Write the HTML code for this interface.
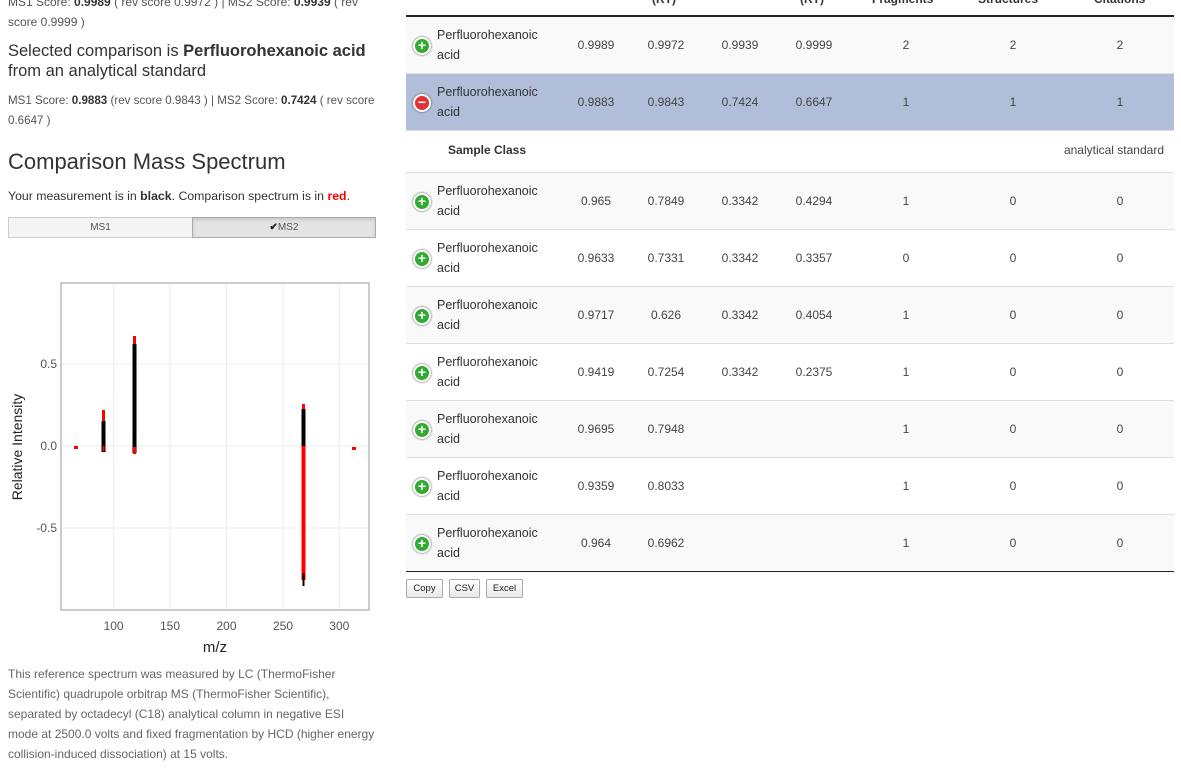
<!DOCTYPE html>
<html><head><meta charset="utf-8">
<style>
*{box-sizing:border-box;margin:0;padding:0}
body{width:1181px;height:768px;overflow:hidden;background:#fff;font-family:"Liberation Sans",sans-serif;color:#333;position:relative}
.a{position:absolute;white-space:nowrap}
.s{font-size:12px;color:#555;line-height:20px}
.row{position:absolute;left:406px;width:768px;height:57px;border-top:1px solid #ddd}
.row div{position:absolute;font-size:12px;color:#444;top:21px;transform:translateX(-50%);white-space:nowrap}
.row .nm{left:31px;top:8px;transform:none;line-height:20px;font-size:12.5px}
.ic{position:absolute;left:7px;top:20px;width:18px;height:18px;border-radius:50%;border:2px solid #fff;box-shadow:0 0 2px #444;color:#fff;font-weight:bold;font-size:14px;line-height:13px;text-align:center}
.g{background:#f9f9f9}
.btn{position:absolute;top:579px;height:19px;border:1px solid #aaa;border-radius:2px;background:linear-gradient(#fff,#e9e9e9);font-size:9.5px;line-height:17px;text-align:center;color:#222}
</style></head><body>

<div class="a s" style="left:8px;top:-8px;width:370px;white-space:normal">MS1 Score: <b style="color:#333">0.9989</b> ( rev score 0.9972 ) | MS2 Score: <b style="color:#333">0.9939</b> ( rev score 0.9999 )</div>
<div class="a" style="left:8px;top:41px;font-size:16.5px;line-height:20px;color:#333">Selected comparison is <b>Perfluorohexanoic acid</b><br>from an analytical standard</div>
<div class="a s" style="left:8px;top:91px;width:372px;white-space:normal;font-size:11.6px">MS1 Score: <b style="color:#333">0.9883</b> (rev score 0.9843 ) | MS2 Score: <b style="color:#333">0.7424</b> ( rev score 0.6647 )</div>
<div class="a" style="left:8px;top:149px;font-size:22px;color:#333">Comparison Mass Spectrum</div>
<div class="a" style="left:8px;top:189px;font-size:12.3px;color:#333">Your measurement is in <b>black</b>. Comparison spectrum is in <b style="color:#f00">red</b>.</div>
<div class="a" style="left:8px;top:217px;width:185px;height:21px;border:1px solid #ccc;background:#f4f4f4;font-size:10px;line-height:19px;text-align:center;color:#555">MS1</div>
<div class="a" style="left:192px;top:217px;width:184px;height:21px;border:1px solid #aaa;background:#e4e4e4;font-size:10px;line-height:19px;text-align:center;color:#555;box-shadow:inset 0 2px 3px rgba(0,0,0,.12)"><b style="color:#222">✔</b>MS2</div>

<svg class="a" style="left:0;top:270px" width="400" height="390" viewBox="0 270 400 390">
<rect x="61" y="283" width="308" height="327" fill="#fff" stroke="#999" stroke-width="1"/>
<g stroke="#ececec" stroke-width="1">
<line x1="113.6" y1="284" x2="113.6" y2="609"/><line x1="170" y1="284" x2="170" y2="609"/><line x1="226.5" y1="284" x2="226.5" y2="609"/><line x1="283" y1="284" x2="283" y2="609"/><line x1="339.3" y1="284" x2="339.3" y2="609"/>
<line x1="62" y1="364" x2="368" y2="364"/><line x1="62" y1="446" x2="368" y2="446"/><line x1="62" y1="528" x2="368" y2="528"/>
</g>
<g font-family="Liberation Sans,sans-serif" font-size="12" fill="#555">
<text x="57" y="368" text-anchor="end">0.5</text><text x="57" y="450" text-anchor="end">0.0</text><text x="57" y="532" text-anchor="end">-0.5</text>
<text x="113.6" y="630" text-anchor="middle">100</text><text x="170" y="630" text-anchor="middle">150</text><text x="226.5" y="630" text-anchor="middle">200</text><text x="283" y="630" text-anchor="middle">250</text><text x="339.3" y="630" text-anchor="middle">300</text>
</g>
<text x="215" y="652" text-anchor="middle" font-family="Liberation Sans,sans-serif" font-size="15" fill="#222">m/z</text>
<text transform="translate(22,447) rotate(-90)" text-anchor="middle" font-family="Liberation Sans,sans-serif" font-size="14" fill="#222">Relative Intensity</text>
<g>
<rect x="74" y="446" width="4" height="3" fill="#f00"/>
<rect x="102" y="410" width="3" height="20" fill="#f00"/><rect x="101.5" y="421" width="4" height="31" fill="#000"/><rect x="102.5" y="446" width="2" height="5" fill="#f00"/>
<rect x="133" y="336" width="3" height="12" fill="#f00"/><rect x="132.5" y="344" width="4" height="109" fill="#000"/><rect x="133" y="447" width="3" height="7" fill="#f00"/>
<rect x="302" y="404" width="3" height="8" fill="#f00"/><rect x="301.5" y="409" width="4" height="38" fill="#000"/><rect x="301.5" y="446" width="4" height="134" fill="#f00"/><rect x="302.5" y="573" width="2" height="13" fill="#000"/>
<rect x="352" y="447" width="4" height="3" fill="#f00"/>
</g>
</svg>

<div class="a" style="left:8px;top:664px;width:368px;white-space:normal;font-size:12px;line-height:20px;color:#666">This reference spectrum was measured by LC (ThermoFisher Scientific) quadrupole orbitrap MS (ThermoFisher Scientific), separated by octadecyl (C18) analytical column in negative ESI mode at 2500.0 volts and fixed fragmentation by HCD (higher energy collision-induced dissociation) at 15 volts.</div>

<div class="a" style="left:406px;top:-8px;width:768px;height:24px;font-size:12px;font-weight:bold;color:#333">
<span class="a" style="left:246px;top:0">(RT)</span><span class="a" style="left:394px;top:0">(RT)</span><span class="a" style="left:466px;top:0">Fragments</span><span class="a" style="left:572px;top:0">Structures</span><span class="a" style="left:688px;top:0">Citations</span>
</div>
<div class="a" style="left:406px;top:15px;width:768px;height:2px;background:#222"></div>

<div class="row g" style="top:17px;border-top:none"><span class="ic" style="background:#3a3">+</span><span class="nm a">Perfluorohexanoic<br>acid</span><div style="left:190px">0.9989</div><div style="left:260px">0.9972</div><div style="left:334px">0.9939</div><div style="left:408px">0.9999</div><div style="left:500px">2</div><div style="left:607px">2</div><div style="left:714px">2</div></div>
<div class="row" style="top:73px;background:#b0bed9"><span class="ic" style="background:#d33">−</span><span class="nm a">Perfluorohexanoic<br>acid</span><div style="left:190px">0.9883</div><div style="left:260px">0.9843</div><div style="left:334px">0.7424</div><div style="left:408px">0.6647</div><div style="left:500px">1</div><div style="left:607px">1</div><div style="left:714px">1</div></div>
<div class="row" style="top:130px;height:43px"><div style="left:81px;top:12px;font-weight:bold;color:#333">Sample Class</div><div style="left:auto;right:10px;top:12px;transform:none">analytical standard</div></div>

<div class="row g" style="top:172px"><span class="ic" style="background:#3a3">+</span><span class="nm a">Perfluorohexanoic<br>acid</span><div style="left:190px">0.965</div><div style="left:260px">0.7849</div><div style="left:334px">0.3342</div><div style="left:408px">0.4294</div><div style="left:500px">1</div><div style="left:607px">0</div><div style="left:714px">0</div></div>
<div class="row" style="top:229px"><span class="ic" style="background:#3a3">+</span><span class="nm a">Perfluorohexanoic<br>acid</span><div style="left:190px">0.9633</div><div style="left:260px">0.7331</div><div style="left:334px">0.3342</div><div style="left:408px">0.3357</div><div style="left:500px">0</div><div style="left:607px">0</div><div style="left:714px">0</div></div>
<div class="row g" style="top:286px"><span class="ic" style="background:#3a3">+</span><span class="nm a">Perfluorohexanoic<br>acid</span><div style="left:190px">0.9717</div><div style="left:260px">0.626</div><div style="left:334px">0.3342</div><div style="left:408px">0.4054</div><div style="left:500px">1</div><div style="left:607px">0</div><div style="left:714px">0</div></div>
<div class="row" style="top:343px"><span class="ic" style="background:#3a3">+</span><span class="nm a">Perfluorohexanoic<br>acid</span><div style="left:190px">0.9419</div><div style="left:260px">0.7254</div><div style="left:334px">0.3342</div><div style="left:408px">0.2375</div><div style="left:500px">1</div><div style="left:607px">0</div><div style="left:714px">0</div></div>
<div class="row g" style="top:400px"><span class="ic" style="background:#3a3">+</span><span class="nm a">Perfluorohexanoic<br>acid</span><div style="left:190px">0.9695</div><div style="left:260px">0.7948</div><div style="left:500px">1</div><div style="left:607px">0</div><div style="left:714px">0</div></div>
<div class="row" style="top:457px"><span class="ic" style="background:#3a3">+</span><span class="nm a">Perfluorohexanoic<br>acid</span><div style="left:190px">0.9359</div><div style="left:260px">0.8033</div><div style="left:500px">1</div><div style="left:607px">0</div><div style="left:714px">0</div></div>
<div class="row g" style="top:514px"><span class="ic" style="background:#3a3">+</span><span class="nm a">Perfluorohexanoic<br>acid</span><div style="left:190px">0.964</div><div style="left:260px">0.6962</div><div style="left:500px">1</div><div style="left:607px">0</div><div style="left:714px">0</div></div>
<div class="a" style="left:406px;top:571px;width:768px;height:1px;background:#222"></div>

<div class="btn" style="left:406px;width:37px">Copy</div>
<div class="btn" style="left:449px;width:31px">CSV</div>
<div class="btn" style="left:486px;width:37px">Excel</div>
</body></html>
